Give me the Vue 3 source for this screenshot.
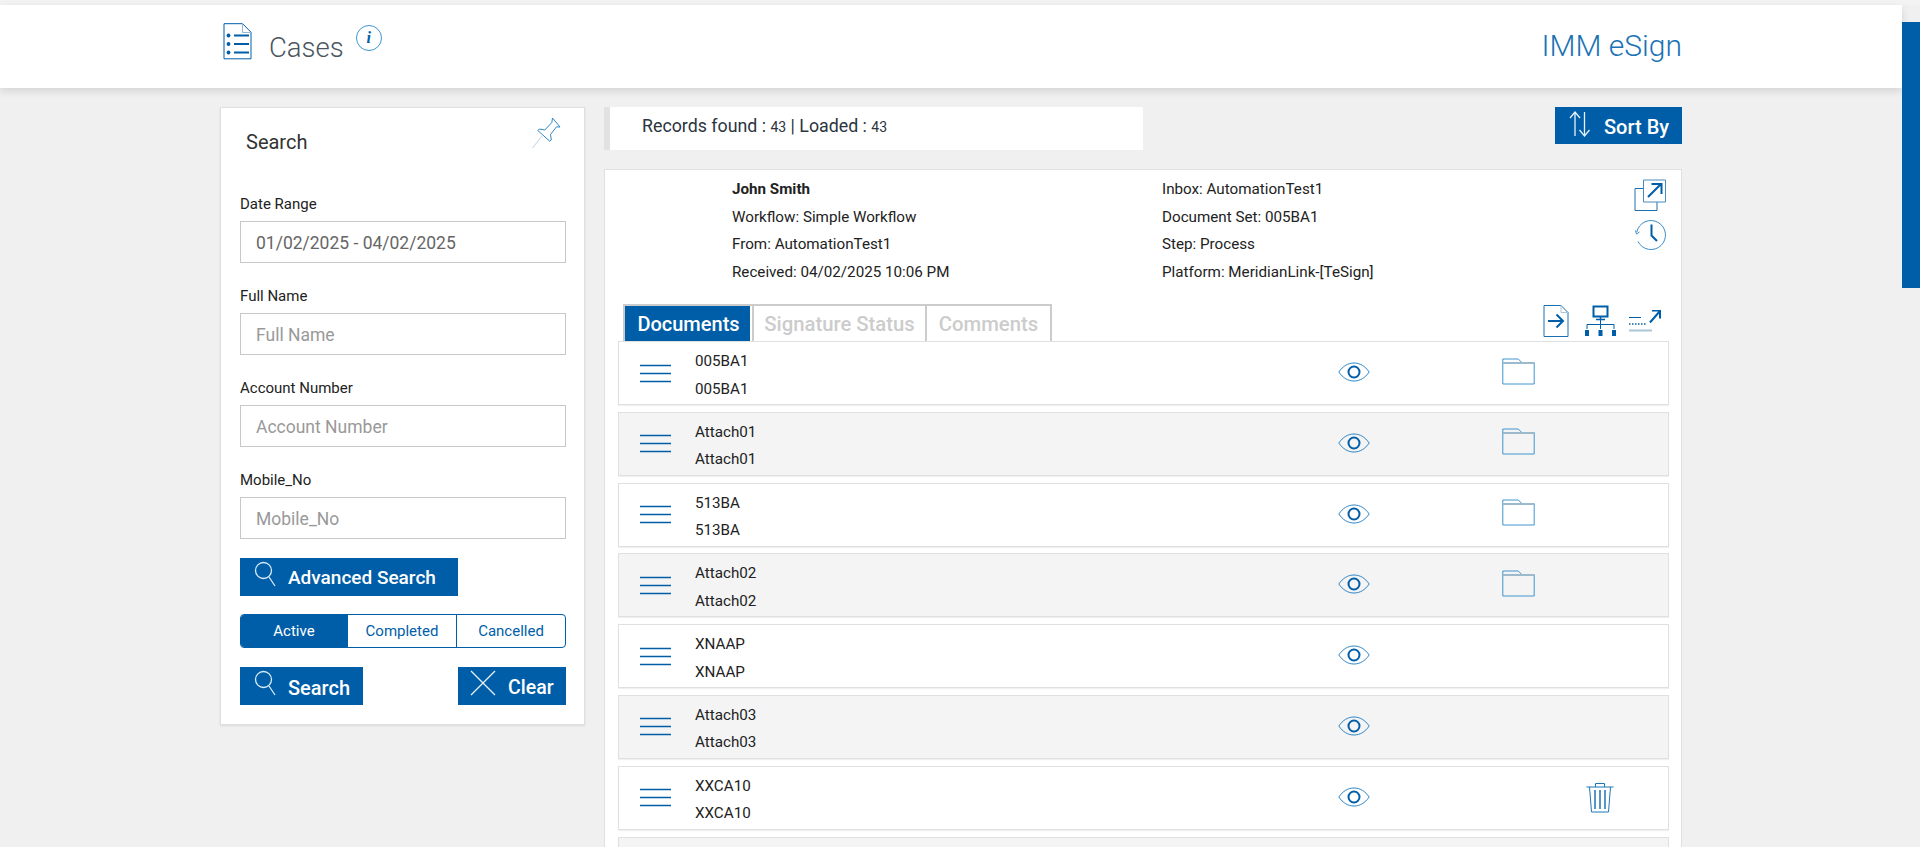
<script setup>
const fields = [
  { label: 'Date Range', placeholder: '', value: '01/02/2025 - 04/02/2025' },
  { label: 'Full Name', placeholder: 'Full Name', value: '' },
  { label: 'Account Number', placeholder: 'Account Number', value: '' },
  { label: 'Mobile_No', placeholder: 'Mobile_No', value: '' },
]
const left = ['Workflow: Simple Workflow', 'From: AutomationTest1', 'Received: 04/02/2025 10:06 PM']
const right = ['Inbox: AutomationTest1', 'Document Set: 005BA1', 'Step: Process', 'Platform: MeridianLink-[TeSign]']
const docs = [
  { name: '005BA1', icon: 'folder' },
  { name: 'Attach01', icon: 'folder' },
  { name: '513BA', icon: 'folder' },
  { name: 'Attach02', icon: 'folder' },
  { name: 'XNAAP', icon: '' },
  { name: 'Attach03', icon: '' },
  { name: 'XXCA10', icon: 'trash' },
]
</script>

<template>
  <div class="page">
    <div class="top-strip"></div>
    <header class="header">
      <div class="wrap header-in">
        <div class="title">
          <svg class="cases-ico" width="29" height="37" viewBox="0 0 29 37" fill="none" stroke="#005ea8">
            <path d="M1 .7h18.500l8.500 8.500v26.600H1z" stroke-width="1"/>
            <path d="M19.500 1v8.500H28" stroke="#8fb8d8" stroke-width="1"/>
            <path d="M11 12.500h15M11 21h15M11 29.500h15" stroke-width="2"/>
            <circle cx="5.500" cy="12.500" r="1.900" fill="#005ea8" stroke="none"/>
            <circle cx="5.500" cy="21" r="1.900" fill="#005ea8" stroke="none"/>
            <circle cx="5.500" cy="29.500" r="1.900" fill="#005ea8" stroke="none"/>
          </svg>
          <span class="cases">Cases</span>
          <span class="info">i</span>
        </div>
        <div class="brand">IMM eSign</div>
      </div>
    </header>

    <div class="wrap main">
      <aside class="panel">
        <div class="panel-head">
          <span class="panel-title">Search</span>
          <svg class="pin" width="29" height="32" viewBox="0 0 29 32" fill="none" stroke="#2f86c5" stroke-width="1">
            <path d="M20.500 1l7.500 9-3.500-.2-6 7.700.8 5.500-1.600 1.200L5.800 13.500l1.500-1.500 5.500 1 7-7.500z"/>
            <path d="M10 19L.5 31" stroke="#b8d4e8"/>
          </svg>
        </div>
        <div v-for="f in fields" :key="f.label" class="field">
          <label class="flabel">{{ f.label }}</label>
          <input class="finput" :placeholder="f.placeholder" :value="f.value" />
        </div>
        <button class="btn adv">
          <svg width="22" height="26" viewBox="0 0 22 26" fill="none" stroke="#d9ecf8" stroke-width="1.300">
            <circle cx="9.500" cy="9.500" r="8"/>
            <path d="M15 16l6 9"/>
          </svg>
          <span>Advanced Search</span>
        </button>
        <div class="toggle">
          <span class="seg on">Active</span>
          <span class="seg">Completed</span>
          <span class="seg">Cancelled</span>
        </div>
        <div class="actions">
          <button class="btn srch">
            <svg width="22" height="26" viewBox="0 0 22 26" fill="none" stroke="#d9ecf8" stroke-width="1.300">
              <circle cx="9.500" cy="9.500" r="8"/>
              <path d="M15 16l6 9"/>
            </svg>
            <span>Search</span>
          </button>
          <button class="btn clr">
            <svg width="26" height="26" viewBox="0 0 26 26" fill="none" stroke="#e6f2fa" stroke-width="1.300">
              <path d="M1 1l24 24M25 1L1 25"/>
            </svg>
            <span>Clear</span>
          </button>
        </div>
      </aside>

      <section class="content">
        <div class="toolbar">
          <div class="records">Records found : <small>43</small> | Loaded : <small>43</small></div>
          <button class="btn sort">
            <svg width="22" height="26" viewBox="0 0 22 26" fill="none" stroke="#e6f2fa" stroke-width="1.300">
              <path d="M6 25V1M1 7l5-6 5 6M15.500 1v24M10.500 19l5 6 5-6"/>
            </svg>
            <span>Sort By</span>
          </button>
        </div>

        <article class="card">
          <div class="meta">
            <div class="meta-col c1">
              <div class="mline"><b>John Smith</b></div>
              <div v-for="t in left" :key="t" class="mline">{{ t }}</div>
            </div>
            <div class="meta-col c2">
              <div v-for="t in right" :key="t" class="mline">{{ t }}</div>
            </div>
            <div class="meta-ico">
              <svg width="33" height="33" viewBox="0 0 33 33" fill="none" stroke="#1f6fae" stroke-width="1">
                <path d="M1 9.500h22v22H1z"/>
                <path d="M9.500 1h22v22h-22z" fill="#fff" stroke="#4a8bbd"/>
                <path d="M14 18L27 5M17.500 5H27.500v10" stroke="#005ea8" stroke-width="2"/>
              </svg>
              <svg class="clock" width="32" height="30" viewBox="0 0 32 30" fill="none">
                <path d="M1.800 12A14.500 14.500 0 1 1 3 21.500" stroke="#3a8cc8" stroke-width="1"/>
                <path d="M.5 10.500l1 3.500 3-2" stroke="#3a8cc8" stroke-width="1"/>
                <path d="M16.500 4.500v11l5.500 5.500" stroke="#005ea8" stroke-width="2"/>
              </svg>
            </div>
          </div>

          <div class="tabbar">
            <div class="tabs">
              <span class="tab on">Documents</span>
              <span class="tab t2">Signature Status</span>
              <span class="tab t3">Comments</span>
            </div>
            <div class="tab-ico">
              <svg width="26" height="32" viewBox="0 0 26 32" fill="none" stroke="#1f6fae" stroke-width="1">
                <path d="M1 .5h17l7 7v24H1z"/>
                <path d="M18 .5v7h7" stroke="#a9c8de"/>
                <path d="M5 16h15M13.500 9.500l6.500 6.500-6.500 6.500" stroke="#005ea8" stroke-width="2"/>
              </svg>
              <svg width="33" height="32" viewBox="0 0 33 32" fill="none" stroke="#005ea8">
                <path d="M9.500 1.500h14v10h-14z" stroke-width="2"/>
                <path d="M16.500 12v3M12 14.500h9" stroke-width="1.500"/>
                <path d="M3 24v-4.500h27V24M16.500 15v9" stroke-width="1"/>
                <path d="M1 25h4v6H1zM14.500 25h4v6h-4zM28 25h4v6h-4z" fill="#005ea8" stroke="none"/>
              </svg>
              <svg class="route" width="33" height="22" viewBox="0 5 33 22" fill="none" stroke="#005ea8">
                <path d="M1 12.500h12" stroke-width="1"/>
                <path d="M1 19h18" stroke-width="1.500" stroke-dasharray="1.500 1.500"/>
                <path d="M1 25.500h23" stroke="#a9c5d6" stroke-width="2"/>
                <path d="M22 17.500L32 6M24 5.500h8v8" stroke-width="2"/>
              </svg>
            </div>
          </div>

          <div class="rows">
            <div v-for="(d, i) in docs" :key="d.name" class="row" :class="{ alt: i % 2 === 1 }">
              <svg class="burger" width="32" height="19" viewBox="0 0 32 19" fill="none" stroke="#005ea8" stroke-width="1.500">
                <path d="M0 1.500h31M0 9.500h31M0 17.500h31"/>
              </svg>
              <div class="names">
                <div>{{ d.name }}</div>
                <div>{{ d.name }}</div>
              </div>
              <svg class="eye" width="32" height="20" viewBox="0 0 32 20" fill="none" stroke="#2f86c5" stroke-width="1">
                <path d="M.8 10C5 4 10 1 16 1s11 3 15.200 9C27 16 22 19 16 19S5 16 .8 10z"/>
                <circle cx="16" cy="10" r="5.500" stroke="#005ea8" stroke-width="2"/>
              </svg>
              <div class="slot">
                <svg v-if="d.icon === 'folder'" width="33" height="27" viewBox="0 0 33 27" fill="none" stroke="#3f95d0" stroke-width="1">
                  <path d="M.8 26V1h15.500l3.500 3.500h12.400V26z"/>
                  <path d="M1 5h31" stroke="#9db9cc" stroke-width="2"/>
                </svg>
              </div>
              <div class="slot2">
                <svg v-if="d.icon === 'trash'" width="28" height="31" viewBox="0 0 28 31" fill="none" stroke="#1f76b5" stroke-width="1">
                  <path d="M.5 5h27"/>
                  <path d="M9.500 5V1.500h9V5"/>
                  <path d="M3.500 5l2 25h17l2-25"/>
                  <path d="M9 8v19M14 8v19M19 8v19" stroke-width="1.500"/>
                </svg>
              </div>
            </div>
            <div class="row alt"></div>
          </div>
        </article>
      </section>
    </div>

    <div class="thumb"></div>
  </div>
</template>

<style>
html, body { margin: 0; height: 100%; overflow: hidden; background: #f0f0f0; }
</style>

<style scoped>
.page { height: 847px; overflow: hidden; background: #f0f0f0; font-family: Roboto, "Liberation Sans", sans-serif; color: #222; }
.top-strip { height: 5px; background: #f3f3f3; }
.header { height: 83px; margin-right: 18px; background: #fff; box-shadow: 0 3px 8px rgba(0,0,0,.12); position: relative; }
.wrap { width: 1462px; margin-left: 220px; }
.header-in { display: flex; justify-content: space-between; height: 100%; }
.title { display: flex; align-items: flex-start; position: relative; }
.cases-ico { margin-top: 18px; margin-left: 3px; }
.cases { margin-left: 17px; margin-top: 25px; font-size: 27.500px; font-weight: 300; color: #4a5560; line-height: 36px; }
.info { margin-left: 12px; margin-top: 20px; box-sizing: border-box; width: 26px; height: 26px; border: 1px solid #3d95d0; border-radius: 50%; color: #005ea8; font: italic bold 16px/24px "Liberation Serif", serif; text-align: center; }
.brand { color: #1a72b4; font-size: 30px; font-weight: 300; margin-top: 23px; line-height: 36px; }
.main { display: flex; align-items: flex-start; margin-top: 19px; }
.panel { box-sizing: border-box; width: 365px; height: 618px; background: #fff; border: 1px solid #e0e0e0; box-shadow: 0 1px 2px rgba(0,0,0,.1); padding: 0 19px; }
.panel-head { display: flex; justify-content: space-between; height: 81px; }
.panel-title { margin: 22px 0 0 6px; font-size: 20px; line-height: 24px; color: #333; }
.pin { margin: 9px 4px 0 0; }
.field { margin-bottom: 18px; }
.flabel { display: block; box-sizing: border-box; font-size: 15px; line-height: 18px; height: 24px; color: #222; padding-top: 6px; }
.finput { display: block; box-sizing: border-box; width: 326px; height: 42px; margin-top: 8px; padding: 2px 15px 0; border: 1px solid #c8c8c8; background: #fff; font: 17.500px Roboto, sans-serif; color: #666; outline: none; }
.finput::placeholder { color: #999; opacity: 1; }
.btn { display: flex; align-items: center; border: 0; padding: 0; background: #005ea8; color: #fff; font: 500 19px/24px Roboto, sans-serif; cursor: pointer; }
.btn span { padding-top: 4px; }
.adv { width: 218px; height: 38px; margin-top: 19px; padding-left: 14px; gap: 12px; }
.adv span { padding-top: 2px; }
.btn svg { margin-top: -6px; }
.toggle { display: flex; box-sizing: border-box; width: 326px; height: 34px; margin-top: 18px; border: 1px solid #005ea8; border-radius: 4px; overflow: hidden; font-size: 15px; color: #005ea8; }
.seg { flex: 1; display: flex; align-items: center; justify-content: center; border-left: 1px solid #005ea8; }
.seg.on { flex: 0 0 106px; background: #005ea8; color: #fff; border-left: 0; }
.actions { display: flex; justify-content: space-between; margin-top: 19px; width: 326px; }
.srch { width: 123px; height: 38px; padding-left: 14px; gap: 12px; font-size: 20px; }
.clr { width: 108px; height: 38px; padding-left: 12px; gap: 12px; font-size: 19.500px; }
.content { margin-left: 19px; width: 1078px; }
.toolbar { display: flex; justify-content: space-between; align-items: flex-start; height: 62px; }
.records { box-sizing: border-box; width: 539px; height: 43px; padding-left: 32px; background: #fff; border-left: 6px solid #e2e2e2; font-size: 17.800px; font-weight: 400; line-height: 38px; color: #2b3440; }
.records small { font-size: 14px; font-weight: 400; }
.sort { width: 127px; height: 37px; padding-left: 14px; gap: 13px; font-size: 20px; }
.sort span { padding-top: 3px; }
.sort svg { margin-top: -3px; }
.card { box-sizing: border-box; background: #fff; border: 1px solid #e0e0e0; padding: 0 12px 0 13px; height: 700px; }
.meta { position: relative; display: flex; height: 134px; }
.meta-col { font-size: 15.200px; line-height: 27.500px; padding-top: 6px; color: #222; }
.c1 { margin-left: 114px; width: 430px; }
.c2 { width: 400px; }
.mline { height: 27.500px; white-space: nowrap; }
.meta-ico { position: absolute; right: 2px; top: 9px; width: 33px; display: flex; flex-direction: column; gap: 8px; }
.clock { margin-left: 1px; }
.tabbar { display: flex; justify-content: space-between; align-items: flex-end; height: 37px; }
.tabs { display: flex; box-sizing: border-box; margin-left: 5px; height: 37px; border: 2px solid #ccc; border-bottom: 0; font-size: 20.300px; font-weight: 500; color: #ccc; }
.tab { display: flex; align-items: center; justify-content: center; box-sizing: border-box; }
.tab.on { width: 125px; padding-left: 2px; background: #005ea8; color: #fff; font-size: 20px; }
.t2 { width: 175px; border-left: 2px solid #ccc; border-right: 2px solid #ccc; margin-left: 2px; }
.t3 { width: 123px; }
.tab-ico { display: flex; align-items: flex-end; gap: 15px; margin-right: 8px; padding-bottom: 4px; }
.route { margin-left: -4px; margin-bottom: 5px; }
.row { display: flex; align-items: center; box-sizing: border-box; height: 64px; margin-bottom: 6.800px; border: 1px solid #e0e0e0; background: #fff; box-shadow: 0 1px 1px rgba(0,0,0,.06); }
.row.alt { background: #f4f4f4; }
.burger { margin-left: 21px; flex: none; }
.names { margin-left: 23px; width: 643px; padding-top: 5px; font-size: 15.200px; line-height: 27.500px; color: #222; flex: none; }
.eye { flex: none; margin-top: -2px; }
.slot { width: 33px; height: 27px; margin-left: 132px; margin-top: -4px; }
.slot2 { width: 28px; height: 31px; margin-left: 51px; }
.thumb { position: fixed; right: 0; top: 22px; width: 18px; height: 266px; background: #005ea8; }
</style>
